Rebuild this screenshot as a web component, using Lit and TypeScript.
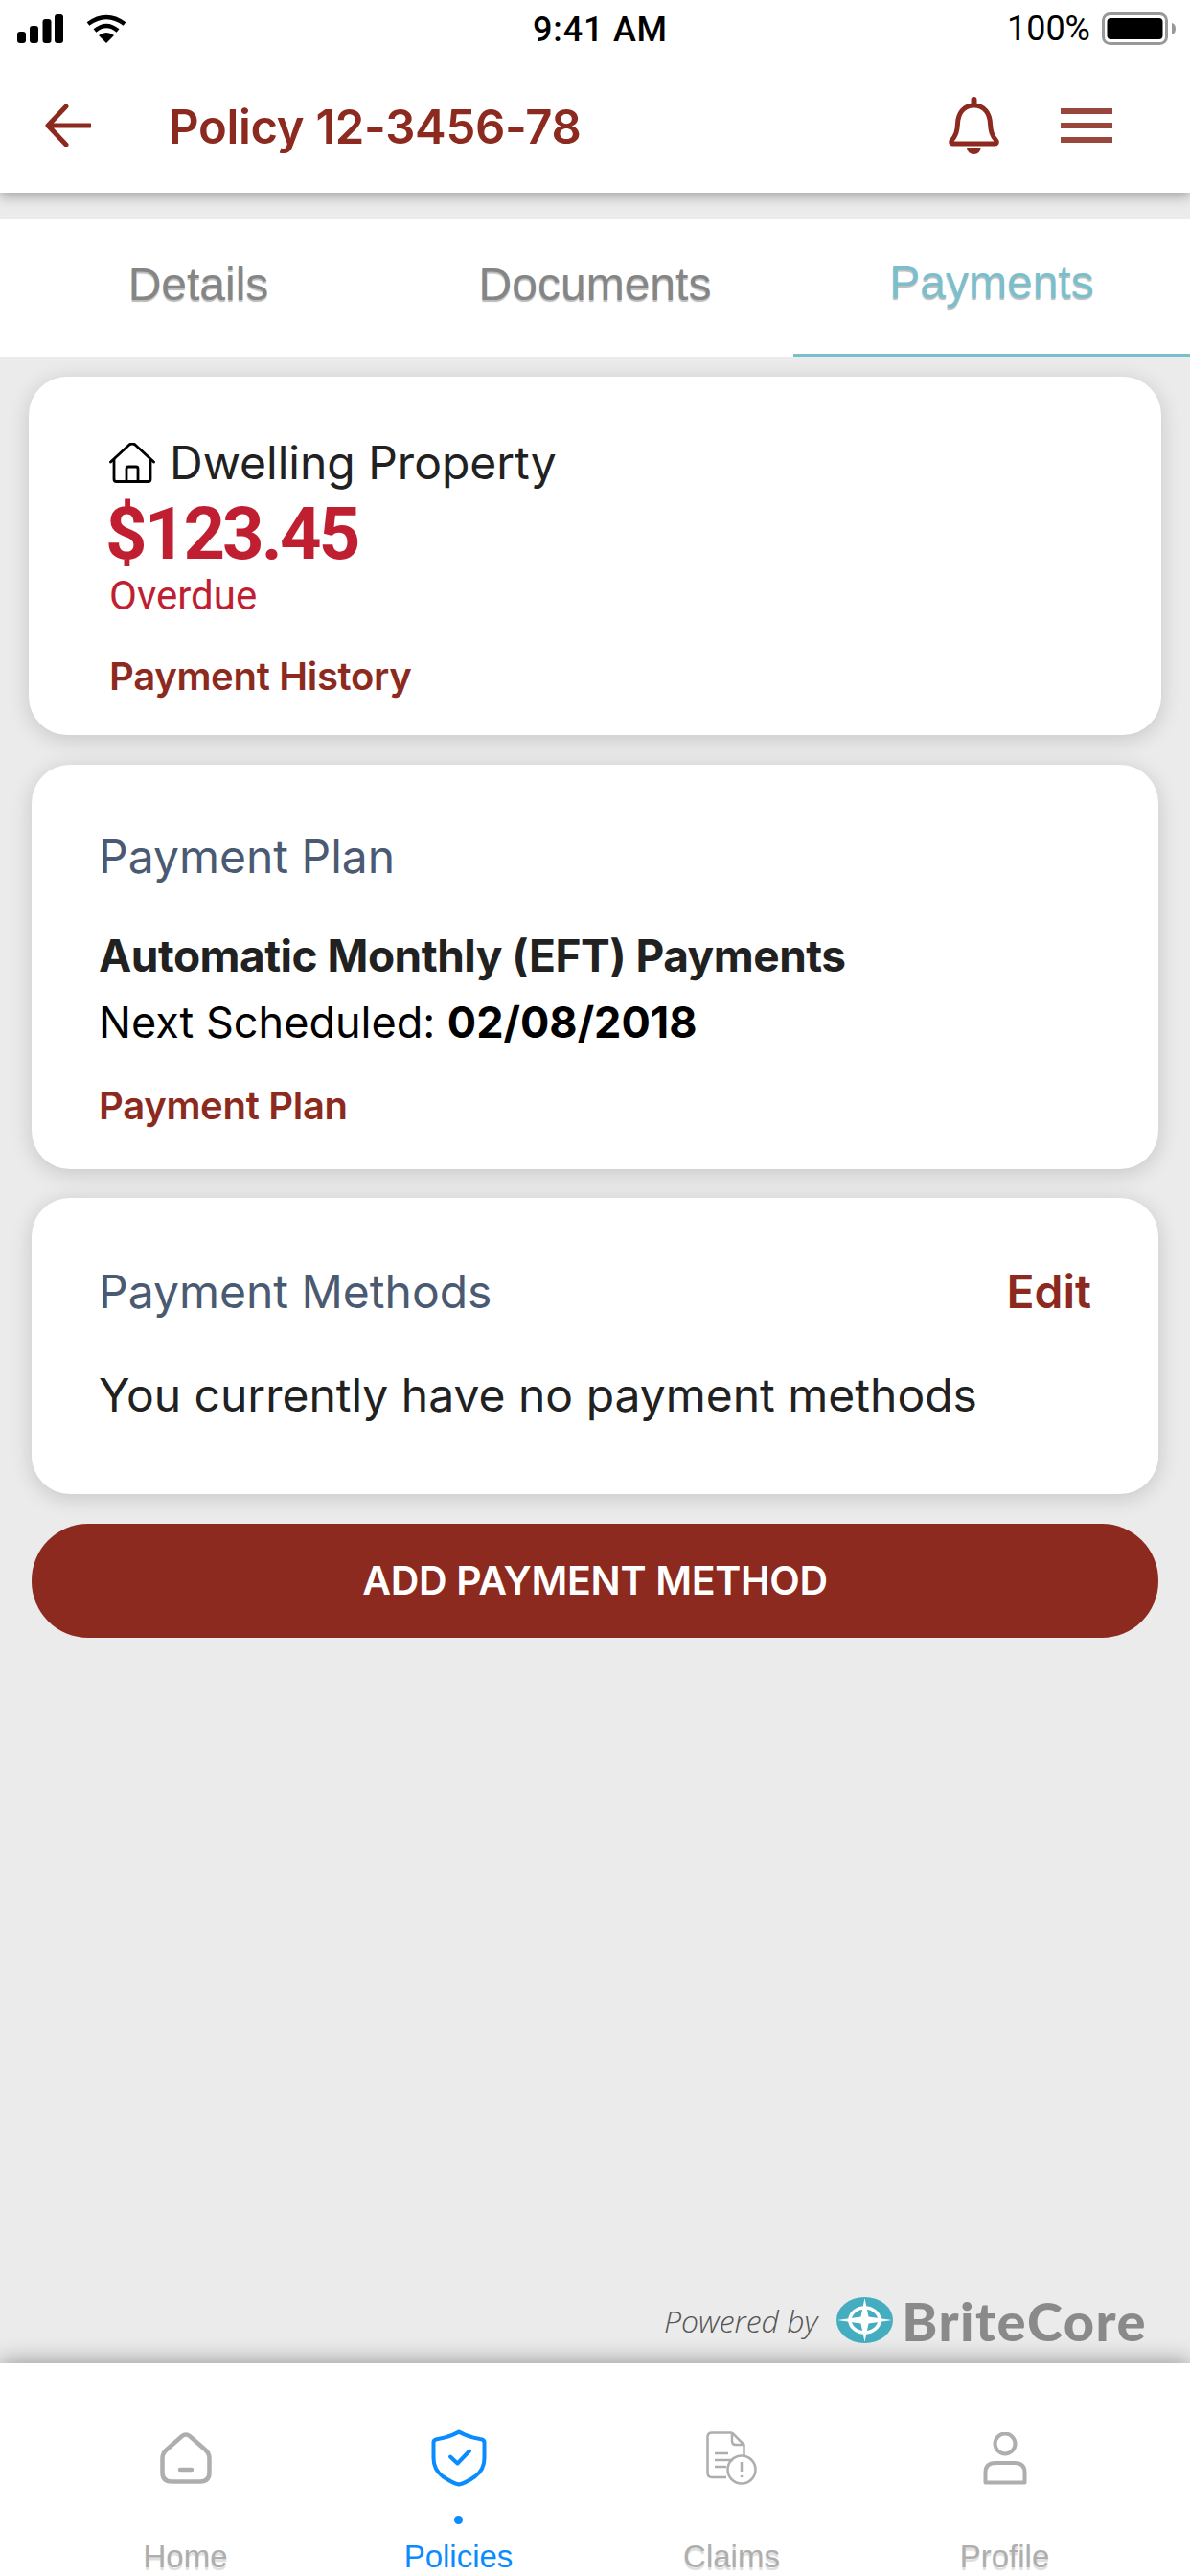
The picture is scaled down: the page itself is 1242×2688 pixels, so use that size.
import { LitElement, html, css } from "lit";
import { customElement } from "lit/decorators.js";

const navItems = [
  { label: "Home", icon: "home" },
  { label: "Policies", icon: "shield", active: true },
  { label: "Claims", icon: "claims" },
  { label: "Profile", icon: "profile" },
];

@customElement("app-root")
export class AppRoot extends LitElement {
  static styles = css`
    :host {
      display: flex;
      flex-direction: column;
      width: 1242px;
      height: 2688px;
      background: #ebebeb;
      font-family: Inter, "Liberation Sans", sans-serif;
      color: #212121;
      overflow: hidden;
    }
    .top {
      height: 201px;
      background: #fff;
      box-shadow: 0 4px 12px rgba(0, 0, 0, 0.3);
      display: flex;
      flex-direction: column;
      flex: none;
      position: relative;
    }
    .status {
      height: 60px;
      padding: 2px 15px 0 18px;
      display: grid;
      grid-template-columns: 1fr auto 1fr;
      align-items: center;
      box-sizing: border-box;
    }
    .status-left {
      display: flex;
      align-items: center;
      gap: 24px;
      margin-top: -2px;
    }
    .time {
      font: 500 36px Roboto, sans-serif;
      color: #000;
      letter-spacing: 0.8px;
      margin-left: 8px;
    }
    .status-right {
      display: flex;
      justify-content: flex-end;
      align-items: center;
      gap: 12px;
      font: 400 36px Roboto, sans-serif;
      color: #000;
      margin-top: -2px;
    }
    .header {
      flex: 1;
      display: flex;
      align-items: center;
      padding: 0 81px 0 47px;
    }
    .title {
      font-size: 49px;
      font-weight: 600;
      color: #8c2a20;
      margin: 3px 0 0 81px;
      flex: 1;
      letter-spacing: -0.3px;
    }
    .bell {
      margin-right: 64px;
    }
    .burger {
      display: flex;
      flex-direction: column;
      gap: 9px;
      width: 54px;
    }
    .burger span {
      height: 6px;
      background: #99463c;
    }
    .tabs {
      margin-top: 27px;
      height: 144px;
      background: #fff;
      display: grid;
      grid-template-columns: repeat(3, 1fr);
      flex: none;
    }
    .tab {
      display: flex;
      align-items: center;
      justify-content: center;
      font: 400 48px "Liberation Sans", sans-serif;
      color: #858585;
      text-shadow: 0 2px 1px #bbb;
      box-sizing: border-box;
      padding-bottom: 8px;
    }
    .tab.active {
      color: #7bbfcd;
      border-bottom: 3px solid #7bbfcd;
    }
    .content {
      flex: 1;
      display: flex;
      flex-direction: column;
      padding: 21px 33px 0;
    }
    .card {
      background: #fff;
      border-radius: 40px;
      box-shadow: 0 4px 22px rgba(0, 0, 0, 0.16);
      box-sizing: border-box;
      margin-bottom: 30px;
      padding: 0 70px;
    }
    .card-first {
      margin: 0 -3px 31px;
      height: 374px;
      padding: 62px 84px 0;
    }
    .dwelling {
      display: flex;
      align-items: center;
      gap: 15px;
      font-size: 48px;
      line-height: 56px;
    }
    .amount {
      font: 700 76px/84px Roboto, sans-serif;
      color: #c01f32;
      letter-spacing: -2.9px;
      margin: 4px 0 0 -4px;
    }
    .overdue {
      font: 400 42px/44px Roboto, sans-serif;
      color: #c01f32;
      margin-top: 1px;
    }
    .link {
      font-size: 40px;
      line-height: 48px;
      font-weight: 600;
      color: #8c2a20;
      letter-spacing: -0.3px;
    }
    .card-first .link {
      margin-top: 38px;
    }
    .card-plan {
      height: 422px;
      padding-top: 68px;
      margin-bottom: 30px;
    }
    .label {
      font-size: 48px;
      line-height: 56px;
      color: #4a5a72;
    }
    .plan-name {
      font-size: 46px;
      font-weight: 700;
      line-height: 52px;
      margin-top: 49px;
      letter-spacing: -0.5px;
    }
    .next {
      font-size: 45px;
      line-height: 52px;
      margin-top: 18px;
      color: #000;
    }
    .next b {
      font-weight: 700;
    }
    .card-plan .link {
      margin-top: 37px;
    }
    .card-methods {
      height: 309px;
      padding-top: 68px;
      margin-bottom: 31px;
    }
    .row {
      display: flex;
      justify-content: space-between;
      align-items: center;
    }
    .edit {
      font-size: 48px;
      font-weight: 600;
      color: #8c2a20;
    }
    .none {
      font-size: 48px;
      line-height: 56px;
      margin-top: 51px;
    }
    .add {
      height: 119px;
      flex: none;
      border-radius: 59px;
      background: #8c2a20;
      color: #fff;
      display: flex;
      align-items: center;
      justify-content: center;
      font-size: 41px;
      font-weight: 600;
      letter-spacing: -0.3px;
      padding-bottom: 2px;
      box-sizing: border-box;
    }
    .powered {
      margin: auto 12px 0 0;
      display: flex;
      justify-content: flex-end;
      align-items: center;
      height: 90px;
    }
    .powered em {
      font: italic 300 32px "Open Sans", sans-serif;
      color: #555;
      margin-right: 20px;
    }
    .powered svg {
      margin-right: 9px;
    }
    .brand {
      font: 900 56px Lato, sans-serif;
      color: #8a8a8a;
      letter-spacing: 1.5px;
    }
    .bottom {
      flex: none;
      height: 222px;
      background: #fff;
      box-shadow: 0 -4px 20px rgba(0, 0, 0, 0.3);
      display: grid;
      grid-template-columns: repeat(4, 285px);
      justify-content: center;
      position: relative;
    }
    .nav {
      display: flex;
      flex-direction: column;
      align-items: center;
      font: 400 33px/36px "Liberation Sans", sans-serif;
      color: #aeaeae;
      text-shadow: 0 3px 1px #ddd;
    }
    .nav-icon {
      margin-top: 68px;
      height: 62px;
      display: flex;
      align-items: center;
    }
    .nav.active {
      color: #0a8cff;
      text-shadow: none;
    }
    .dot {
      width: 9px;
      height: 9px;
      border-radius: 50%;
      background: #0a8cff;
      margin: 29px 0 16px;
    }
    .spacer {
      height: 54px;
    }
  `;

  renderNavIcon(name: string) {
    if (name === "home") {
      return html`<svg width="54" height="54" viewBox="0 0 54 54" fill="none" stroke="#aeaeae" stroke-width="4.5">
        <path d="M27 2.500 Q29 2.500 31 4 L47 18 Q51.500 22 51.500 27 V42 Q51.500 51.500 42 51.500 H12 Q2.500 51.500 2.500 42 V27 Q2.500 22 7 18 L23 4 Q25 2.500 27 2.500 Z" />
        <path d="M21 39 H33" stroke-width="4.500" stroke-linecap="round" />
      </svg>`;
    }
    if (name === "shield") {
      return html`<svg width="58" height="60" viewBox="0 0 58 60" fill="none" stroke="#0a8cff" stroke-width="4">
        <path d="M29 2.500 Q38 8 51 10 Q55 10.500 55.500 13 V30 Q55.500 42 46 49 Q36 56 29 57.500 Q22 56 12 49 Q2.500 42 2.500 30 V13 Q3 10.500 7 10 Q20 8 29 2.500 Z" stroke-linejoin="round" />
        <path d="M20 28.500 L27.500 35.500 L40 22.500" stroke-linecap="round" stroke-linejoin="round" />
      </svg>`;
    }
    if (name === "claims") {
      return html`<svg width="53" height="56" viewBox="0 0 53 56" fill="none" stroke="#aeaeae" stroke-width="2.500">
        <path d="M27 1.500 H6 Q1.500 1.500 1.500 6 V43 Q1.500 48 6 48 H21" />
        <path d="M27 1.500 L39.500 14 V25 M27 1.500 V10 Q27 14 31 14 H39.500" stroke-linejoin="round" />
        <path d="M9 23 H23 M9 30 H28 M9 37 H21" />
        <circle cx="37" cy="40" r="14.500" />
        <path d="M37 32 V42 M37 46 V48" />
      </svg>`;
    }
    return html`<svg width="46" height="55" viewBox="0 0 46 55" fill="none" stroke="#aeaeae" stroke-width="4">
      <circle cx="23" cy="12" r="10.500" />
      <path d="M2.500 52.500 V42 Q2.500 32 13 32 H33 Q43.500 32 43.500 42 V52.500 Z" stroke-linejoin="round" />
    </svg>`;
  }

  render() {
    return html`
      <div class="top">
        <div class="status">
          <div class="status-left">
            <svg width="48" height="30" viewBox="0 0 48 30">
              <rect x="0" y="18" width="9" height="12" rx="3" />
              <rect x="13" y="12" width="9" height="18" rx="3" />
              <rect x="26.500" y="5" width="9" height="25" rx="3" />
              <rect x="39" y="0" width="9" height="30" rx="3" />
            </svg>
            <svg width="42" height="30" viewBox="0 0 42 30" fill="none" stroke="#000" stroke-width="4.500">
              <path d="M2 10 Q21 -4 40 10" />
              <path d="M9 17 Q21 7 33 17" />
              <path d="M21 30 L13 22 Q21 16 29 22 Z" fill="#000" stroke="none" />
            </svg>
          </div>
          <div class="time">9:41 AM</div>
          <div class="status-right">
            <span>100%</span>
            <svg width="77" height="34" viewBox="0 0 77 34">
              <rect x="1.500" y="1.500" width="66" height="31" rx="7" fill="none" stroke="#999" stroke-width="3" />
              <rect x="5.500" y="6" width="58" height="22" rx="4" />
              <path d="M73 11 Q77 12 77 17 Q77 22 73 23 Z" fill="#999" />
            </svg>
          </div>
        </div>
        <div class="header">
          <svg width="48" height="44" viewBox="0 0 48 44" fill="none" stroke="#8c2a20" stroke-width="5" stroke-linecap="round">
            <path d="M47 22 H3 M22 2 L3 22 L22 42" stroke-linejoin="round" />
          </svg>
          <div class="title">Policy 12-3456-78</div>
          <svg class="bell" width="53" height="60" viewBox="0 0 53 60" fill="none" stroke="#8c2a20" stroke-width="5">
            <path d="M26.500 9 C15 9 10 18 9.500 28 C9 36 8 40 3 46 Q2 49 5 49 H48 Q51 49 50 46 C45 40 44 36 43.500 28 C43 18 38 9 26.500 9 Z" stroke-linejoin="round" />
            <path d="M26.500 8 V3" stroke-width="6" stroke-linecap="round" />
            <path d="M19 53 H33.500 Q33 60 26.500 60 Q20 60 19 53 Z" fill="#8c2a20" stroke="none" />
          </svg>
          <div class="burger"><span></span><span></span><span></span></div>
        </div>
      </div>
      <div class="tabs">
        <div class="tab">Details</div>
        <div class="tab">Documents</div>
        <div class="tab active">Payments</div>
      </div>
      <div class="content">
        <div class="card card-first">
          <div class="dwelling">
            <svg width="48" height="42" viewBox="0 0 48 42" fill="none" stroke="#000" stroke-width="2.800">
              <path d="M1.500 20 L21 2 Q24 0 27 2 L46.500 20" stroke-linecap="round" stroke-linejoin="round" />
              <path d="M5 17 V38 Q5 40.500 7.500 40.500 H40.500 Q43 40.500 43 38 V17" />
              <path d="M18 40.500 V27 Q18 25 20 25 H28 Q30 25 30 27 V40.500" />
            </svg>
            <span>Dwelling Property</span>
          </div>
          <div class="amount">$123.45</div>
          <div class="overdue">Overdue</div>
          <div class="link">Payment History</div>
        </div>
        <div class="card card-plan">
          <div class="label">Payment Plan</div>
          <div class="plan-name">Automatic Monthly (EFT) Payments</div>
          <div class="next">Next Scheduled: <b>02/08/2018</b></div>
          <div class="link">Payment Plan</div>
        </div>
        <div class="card card-methods">
          <div class="row">
            <div class="label">Payment Methods</div>
            <div class="edit">Edit</div>
          </div>
          <div class="none">You currently have no payment methods</div>
        </div>
        <div class="add">ADD PAYMENT METHOD</div>
        <div class="powered">
          <em>Powered by</em>
          <svg width="59" height="48" viewBox="0 0 59 48" preserveAspectRatio="none">
            <ellipse cx="29.500" cy="24" rx="29.500" ry="24" fill="#45adc0" />
            <ellipse cx="29.500" cy="24" rx="15.500" ry="13" fill="none" stroke="#fff" stroke-width="3.600" />
            <path d="M29.500 1 L33.500 20.500 L58 24 L33.500 27.500 L29.500 47 L25.500 27.500 L1 24 L25.500 20.500 Z" fill="#fff" />
          </svg>
          <span class="brand">BriteCore</span>
        </div>
      </div>
      <div class="bottom">
        ${navItems.map(
          (item) => html`
            <div class="nav ${item.active ? "active" : ""}">
              <div class="nav-icon">${this.renderNavIcon(item.icon)}</div>
              ${item.active ? html`<div class="dot"></div>` : html`<div class="spacer"></div>`}
              <div>${item.label}</div>
            </div>
          `
        )}
      </div>
    `;
  }
}
